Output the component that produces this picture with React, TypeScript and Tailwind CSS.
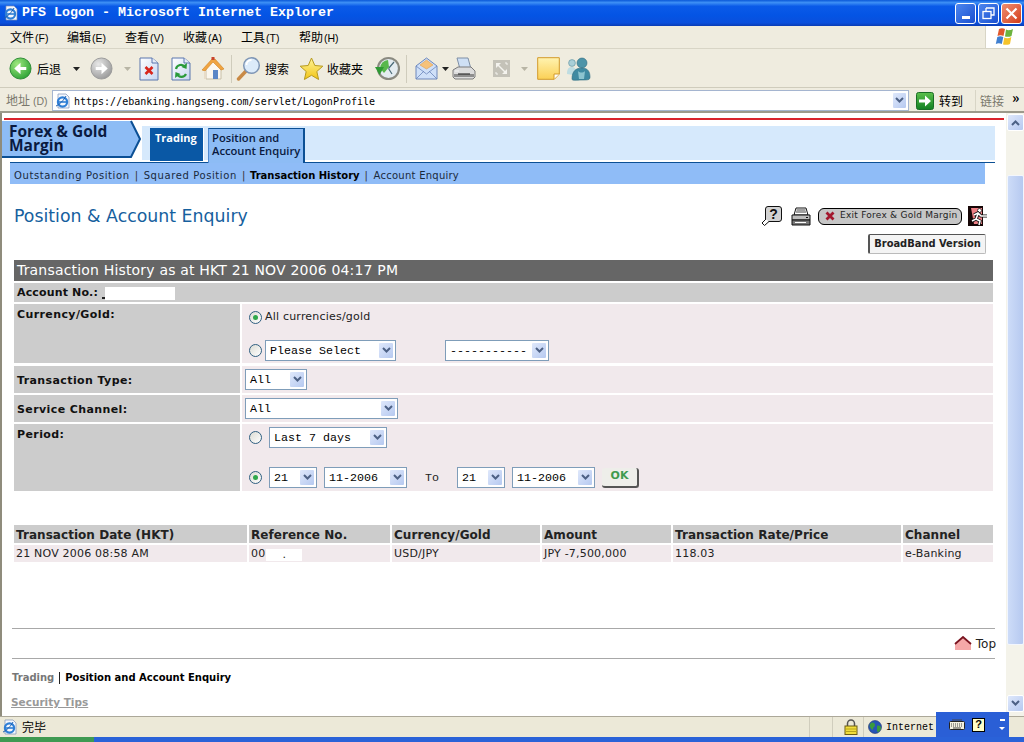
import React from "react";

const Ie = ({ s = 16 }: { s?: number }) => (
  <svg width={s} height={s} viewBox="0 0 16 16">
    <path d="M3 1h8l3 3v11H3z" fill="#f4f7fd" stroke="#7d8fb5" strokeWidth=".7" />
    <circle cx="7.5" cy="9" r="4.6" fill="none" stroke="#2f7fd6" strokeWidth="2.2" />
    <path d="M3.5 9h8" stroke="#2f7fd6" strokeWidth="1.6" />
    <path d="M1 13c3-1 8-6 10-10" stroke="#1c5fb0" strokeWidth="1" fill="none" />
  </svg>
);

const Arrow = ({ gray }: { gray?: boolean }) => (
  <svg width="23" height="23" viewBox="0 0 24 24">
    <defs>
      <radialGradient id={gray ? "ga" : "gb"} cx=".35" cy=".3" r=".85">
        <stop offset="0" stopColor={gray ? "#e8e8e8" : "#9fe87f"} />
        <stop offset="1" stopColor={gray ? "#8f8f8f" : "#1f9a2c"} />
      </radialGradient>
    </defs>
    <circle cx="12" cy="12" r="11" fill={`url(#${gray ? "ga" : "gb"})`} stroke={gray ? "#9a9a9a" : "#2c8a34"} />
    {gray ? (
      <path d="M6 10.5h6V6l6.5 6-6.5 6v-4.5H6z" fill="#fff" />
    ) : (
      <path d="M18 10.5h-6V6l-6.5 6 6.5 6v-4.5h6z" fill="#fff" />
    )}
  </svg>
);

const Drop = ({ light }: { light?: boolean }) => (
  <svg width="7" height="4" viewBox="0 0 7 4">
    <path d="M0 0h7L3.5 4z" fill={light ? "#b8b5a5" : "#222"} />
  </svg>
);

const PageIcon = ({ children }: { children: React.ReactNode }) => (
  <svg width="20" height="24" viewBox="0 0 20 24">
    <defs>
      <linearGradient id="pg" x1="0" y1="0" x2="1" y2="1">
        <stop offset="0" stopColor="#ffffff" />
        <stop offset="1" stopColor="#c6d6f2" />
      </linearGradient>
    </defs>
    <path d="M1 1h12l6 5v17H1z" fill="url(#pg)" stroke="#5b76ad" />
    <path d="M13 1v5h6" fill="#e6ecf8" stroke="#5b76ad" />
    {children}
  </svg>
);

const Home = () => (
  <svg width="24" height="24" viewBox="0 0 24 24">
    <path d="M5 11v11h15V10L12 4z" fill="#fbf7ee" stroke="#c8bfa8" />
    <path d="M1 13 11 2h3l9 10-3 1-8-8-8 9z" fill="#f0a440" stroke="#d08220" strokeWidth=".6" />
    <path d="M3 14h2v8H3z" fill="#e8dcc8" />
    <rect x="12" y="13" width="5" height="9" fill="#5a86c6" />
    <rect x="10.500" y="0" width="3" height="3" fill="#c8442c" />
  </svg>
);

const Search = () => (
  <svg width="25" height="25" viewBox="0 0 25 25">
    <path d="M10 15 2.500 23" stroke="#c98a45" strokeWidth="3.400" strokeLinecap="round" />
    <circle cx="15.500" cy="9.500" r="7.800" fill="#dcebfa" stroke="#7f96b5" strokeWidth="1.500" />
    <path d="M10.500 9a5 5 0 0 1 5-5" stroke="#fff" strokeWidth="1.800" fill="none" />
  </svg>
);

const Star = () => (
  <svg width="25" height="24" viewBox="0 0 25 24">
    <defs>
      <linearGradient id="st" x1="0" y1="0" x2="0" y2="1">
        <stop offset="0" stopColor="#fff59a" />
        <stop offset="1" stopColor="#f2c414" />
      </linearGradient>
    </defs>
    <path d="m12.500 1 3.300 7.500 8 .7-6 5.300 1.800 8-7.100-4.200-7.100 4.200 1.800-8-6-5.300 8-.7z" fill="url(#st)" stroke="#b79a20" />
  </svg>
);

const History = () => (
  <svg width="25" height="25" viewBox="0 0 25 25">
    <circle cx="13.500" cy="12.500" r="10.500" fill="#e4ecf0" stroke="#8a8a80" strokeWidth="2.200" />
    <path d="M13.500 12.500 19 6M13.500 12.500 17 18" stroke="#4a6a78" strokeWidth="1.200" />
    <path d="M13 4a8.500 8.500 0 0 0-8 8l4 5 5-6z" fill="#58b84c" />
    <path d="M0 11h9l-4.500 8z" fill="#2f9a34" />
  </svg>
);

const Mail = () => (
  <svg width="23" height="25" viewBox="0 0 23 25">
    <path d="M1 10 11.500 2 22 10v13H1z" fill="#cfe0f8" stroke="#6c87bb" />
    <path d="M5 9 11.500 4 18 9l-6.500 4z" fill="#f6c27a" stroke="#e0a050" strokeWidth=".6" />
    <path d="M1 10l10.500 8L22 10" fill="none" stroke="#6c87bb" strokeWidth=".8" />
    <path d="M1 23 9 15M22 23l-8-8" stroke="#6c87bb" strokeWidth=".8" />
  </svg>
);

const Printer = () => (
  <svg width="24" height="24" viewBox="0 0 24 24">
    <path d="M5 1h11l3 11H8z" fill="#cfe0f5" stroke="#7f8fa5" />
    <path d="M1 13 6 10h13l4 4v6l-2 2H3l-2-2z" fill="#dcdcdc" stroke="#7a7a7a" />
    <path d="M2 17h20v3H2z" fill="#8e8e8e" />
    <path d="M6 17h12" stroke="#333" strokeWidth="1.200" />
    <path d="M3 14h4" stroke="#f4f4f4" />
  </svg>
);

const FullScreen = () => (
  <svg width="17" height="17" viewBox="0 0 17 17">
    <rect x="0" y="0" width="17" height="17" fill="#c4c2b8" />
    <path d="M3 3h5L3 8zM14 14H9l5-5z" fill="#f4f3ee" />
    <path d="m5 5 7 7" stroke="#f4f3ee" strokeWidth="1.400" />
    <path d="M12 3h2v2M3 12v2h2" stroke="#f4f3ee" fill="none" />
  </svg>
);

const Note = () => (
  <svg width="23" height="23" viewBox="0 0 23 23">
    <defs>
      <linearGradient id="nt" x1="0" y1="0" x2="0" y2="1">
        <stop offset="0" stopColor="#fff3b0" />
        <stop offset="1" stopColor="#fbd056" />
      </linearGradient>
    </defs>
    <path d="M.7.700h21.600V17l-5 5.300H.7z" fill="url(#nt)" stroke="#d39a2a" />
    <path d="M17 22v-5h5.300" fill="#fff" stroke="#d39a2a" />
  </svg>
);

const Messenger = () => (
  <svg width="25" height="24" viewBox="0 0 25 24">
    <circle cx="6" cy="6" r="3.400" fill="#a9cfd8" stroke="#5d8e9c" strokeWidth=".6" />
    <path d="M1 17c0-6 2-7 5-7 2 0 3 1 4 3l-3 5z" fill="#bfdde2" />
    <circle cx="16" cy="6" r="5" fill="#4e94a8" stroke="#2f6c80" strokeWidth=".6" />
    <path d="M6 22c0-8 4-11 10-11s8 4 8 9c0 3-2 3-8 3s-10 1-10-1z" fill="#3f8aa2" stroke="#2f6c80" strokeWidth=".6" />
    <path d="M12 14c2 2 5 2 7 0l-1 8h-5z" fill="#8cc4d0" />
  </svg>
);

const Go = () => (
  <svg width="18" height="18" viewBox="0 0 18 18">
    <defs>
      <linearGradient id="go" x1="0" y1="0" x2="0" y2="1">
        <stop offset="0" stopColor="#5cc04c" />
        <stop offset="1" stopColor="#128022" />
      </linearGradient>
    </defs>
    <rect x=".5" y=".5" width="17" height="17" rx="2" fill="url(#go)" stroke="#1a6d26" />
    <path d="M3 7.500h6V3.500l6 5.500-6 5.500v-4H3z" fill="#fff" />
  </svg>
);

const Flag = () => (
  <svg width="20" height="19" viewBox="0 0 20 19">
    <path d="M4 1c2-1 4-1 6 0L8.500 8c-2-1-4-1-6 0z" fill="#e0582c" />
    <path d="M11 1.500c2 1 4 1 7-.5l-1.500 7c-2 1-4.500 1-6.500.5z" fill="#6cb33f" />
    <path d="M2.300 9c2-1 4-1 6 0l-1.500 7c-2-1-4-1-6 0z" fill="#3f7fd0" />
    <path d="M9.300 9.500c2 1 4.500 1 7-.5L15 16c-2 1-5 1-7 .5z" fill="#f5c32c" />
  </svg>
);

const Lock = () => (
  <svg width="14" height="16" viewBox="0 0 14 16">
    <path d="M3.500 7V4.500a3.500 3.500 0 0 1 7 0V7" fill="none" stroke="#555" strokeWidth="1.500" />
    <rect x="1" y="7" width="12" height="8.500" fill="#f2de3c" stroke="#6a5d14" />
    <path d="M1 10h12M1 12.500h12" stroke="#b7a41c" />
  </svg>
);

const Globe = () => (
  <svg width="14" height="14" viewBox="0 0 14 14">
    <circle cx="7" cy="7" r="6.500" fill="#2653b5" stroke="#1c2f6a" strokeWidth=".6" />
    <path d="M3 3c2-1 4 0 4 2S5 7 5 9 3 9 2 7 2 4 3 3zM9 6c2-1 4 0 4 2s-2 4-3 4-1-2-1-3z" fill="#3a9a3c" />
  </svg>
);

const Keyboard = () => (
  <svg width="16" height="11" viewBox="0 0 16 11">
    <rect x=".5" y="2.500" width="15" height="8" rx="1" fill="#f2efe0" stroke="#222" />
    <path d="M2 5h12M2 7h12" stroke="#444" strokeDasharray="1 1" />
    <path d="M4 9h8M3 1h10" stroke="#444" />
  </svg>
);

const Help = () => (
  <div className="flex h-[14px] w-[13px] items-center justify-center border border-black bg-[#ffffc8] text-[11px] font-bold leading-none text-black [font-family:'Liberation_Sans',sans-serif]">
    ?
  </div>
);

const HelpBubble = () => (
  <svg width="21" height="21" viewBox="0 0 21 21">
    <rect x="4.500" y=".5" width="16" height="15" rx="2.500" fill="#d2d2d2" stroke="#111" />
    <path d="M5 13 1 17l2.500 2.500L8 15.500" fill="#fff" stroke="#111" />
    <text x="12.500" y="13" fontSize="14" fontWeight="700" textAnchor="middle" fontFamily="'Liberation Sans',sans-serif" fill="#111">?</text>
  </svg>
);

const PagePrinter = () => (
  <svg width="20" height="19" viewBox="0 0 20 19">
    <path d="M5 1h10l2 7H3z" fill="#fff" stroke="#111" />
    <path d="M5.500 3h9M5 5h10" stroke="#111" strokeWidth=".8" />
    <path d="M1 8h18v5H1z" fill="#bdbdbd" stroke="#111" />
    <path d="M1 13h18v5H1z" fill="#777" stroke="#111" />
    <path d="M4 15.500h11" stroke="#fff" />
    <path d="M15 10.500h2" stroke="#111" />
  </svg>
);

const ExitMan = () => (
  <svg width="20" height="20" viewBox="0 0 20 20">
    <rect x="0" y="0" width="15" height="20" fill="#160606" />
    <path d="M3 2h11v16H6z" fill="#ee7f85" />
    <circle cx="11.500" cy="4.500" r="2" fill="#fff" stroke="#111" strokeWidth=".7" />
    <path d="m6 9 4-2 3 3h6M10 8l-2 5-4 2M8 13l4 2-1 4" stroke="#111" strokeWidth="3.200" fill="none" />
    <path d="m6 9 4-2 3 3h6M10 8l-2 5-4 2M8 13l4 2-1 4" stroke="#fff" strokeWidth="1.600" fill="none" />
  </svg>
);

const Chevron = ({ c = "#4d6185" }: { c?: string }) => (
  <svg width="9" height="7" viewBox="0 0 9 7">
    <path d="m1 1 3.500 3.500L8 1" stroke={c} strokeWidth="2" fill="none" />
  </svg>
);

const ChevronUp = () => (
  <svg width="9" height="7" viewBox="0 0 9 7">
    <path d="m1 6 3.500-3.500L8 6" stroke="#4d6185" strokeWidth="2" fill="none" />
  </svg>
);

const ArrowBox = ({ className }: { className: string }) => (
  <div className={`flex items-center justify-center rounded-[2px] border border-white bg-gradient-to-br from-[#dfe8fb] to-[#b6c9f0] ${className}`}>
    <Chevron />
  </div>
);

const Select = ({ text, className }: { text: string; className: string }) => (
  <div className={`flex h-[21px] shrink-0 items-center justify-between border border-[#7f9db9] bg-white pl-[4px] pr-[1px] text-[11.67px] text-black [font-family:'Liberation_Mono',monospace] ${className}`}>
    <span className="whitespace-pre pt-[2px]">{text}</span>
    <ArrowBox className="h-[17px] w-[16px]" />
  </div>
);

const Radio = ({ on }: { on?: boolean }) => (
  <div className="flex h-[13px] w-[13px] shrink-0 items-center justify-center rounded-full border border-[#2f5f80] bg-gradient-to-br from-[#dcdcd4] to-white">
    {on && <div className="h-[5px] w-[5px] rounded-full bg-[#2fa84a]" />}
  </div>
);

const Menu = ({ t, k, w }: { t: string; k: string; w: string }) => (
  <div className={`whitespace-nowrap ${w}`}>
    {t}
    <span className="ml-[1px] text-[10.500px] [font-family:'Liberation_Sans',sans-serif]">({k})</span>
  </div>
);

const Label = ({ children, className = "" }: { children: React.ReactNode; className?: string }) => (
  <div className={`w-[226px] shrink-0 bg-[#cccccc] pl-[3px] text-[11px] font-bold tracking-[.4px] text-[#111] ${className}`}>{children}</div>
);

const columns = [
  ["w-[233px]", "Transaction Date (HKT)", "21 NOV 2006 08:58 AM"],
  ["w-[141px]", "Reference No.", "00"],
  ["w-[148px]", "Currency/Gold", "USD/JPY"],
  ["w-[129px]", "Amount", "JPY -7,500,000"],
  ["w-[228px]", "Transaction Rate/Price", "118.03"],
  ["w-[90px]", "Channel", "e-Banking"],
];

export default function App() {
  return (
    <div className="relative flex h-[742px] w-[1024px] flex-col overflow-hidden bg-[#ece9d8] [font-family:'DejaVu_Sans',sans-serif]">
      {/* title bar */}
      <div className="flex h-[26px] shrink-0 items-center bg-[linear-gradient(180deg,#0a58d8_0%,#3d8ff5_10%,#0a5ae8_24%,#0454e4_60%,#0a4fdc_88%,#0a3cb4_100%)] pl-[3px] pr-[2px]">
        <Ie />
        <div className="ml-[3px] flex-1 whitespace-pre text-[13.33px] font-bold text-white [font-family:'Liberation_Mono',monospace]">PFS Logon - Microsoft Internet Explorer</div>
        <div className="flex gap-[2px]">
          <div className="flex h-[21px] w-[21px] items-end justify-center rounded-[3px] border border-white bg-gradient-to-br from-[#4d86ee] to-[#1a4fd0] pb-[4px]">
            <div className="h-[3px] w-[8px] bg-white" />
          </div>
          <div className="flex h-[21px] w-[21px] items-center justify-center rounded-[3px] border border-white bg-gradient-to-br from-[#4d86ee] to-[#1a4fd0]">
            <svg width="13" height="13" viewBox="0 0 13 13">
              <path d="M4 1h8v7H9M4 1v3" fill="none" stroke="#fff" strokeWidth="1.300" />
              <rect x="1" y="4.500" width="8" height="7" fill="none" stroke="#fff" strokeWidth="1.300" />
            </svg>
          </div>
          <div className="flex h-[21px] w-[21px] items-center justify-center rounded-[3px] border border-white bg-gradient-to-br from-[#ee8d70] to-[#d33a12]">
            <svg width="13" height="13" viewBox="0 0 13 13">
              <path d="m1.500 1.500 10 10M11.500 1.500l-10 10" stroke="#fff" strokeWidth="2.200" />
            </svg>
          </div>
        </div>
      </div>

      {/* menu bar */}
      <div className="flex h-[23px] shrink-0 items-center border-b border-[#d8d5c6] bg-[#efecdf] pl-[10px] text-[12px] text-black [font-family:'Noto_Sans_CJK_SC',sans-serif]">
        <Menu t="文件" k="F" w="w-[57px]" />
        <Menu t="编辑" k="E" w="w-[58px]" />
        <Menu t="查看" k="V" w="w-[58px]" />
        <Menu t="收藏" k="A" w="w-[58px]" />
        <Menu t="工具" k="T" w="w-[58px]" />
        <Menu t="帮助" k="H" w="w-[58px]" />
        <div className="flex-1" />
        <div className="flex h-full w-[39px] items-center justify-center border-l border-[#d8d5c6] bg-white">
          <Flag />
        </div>
      </div>

      {/* toolbar */}
      <div className="flex h-[39px] shrink-0 items-center border-b border-[#cfccbc] bg-[#efecdf] pl-[9px] pt-[1px] text-[12px] text-black [font-family:'Noto_Sans_CJK_SC',sans-serif]">
        <Arrow />
        <span className="ml-[5px] w-[24px] whitespace-nowrap">后退</span>
        <div className="ml-[12px]"><Drop /></div>
        <div className="ml-[10px]"><Arrow gray /></div>
        <div className="ml-[11px]"><Drop light /></div>
        <div className="ml-[8px]">
          <PageIcon><path d="m6.500 10 7 7M13.500 10l-7 7" stroke="#d8261c" strokeWidth="2.600" /></PageIcon>
        </div>
        <div className="ml-[12px]">
          <PageIcon>
            <path d="M5 12a5 5 0 0 1 9-2" stroke="#2a9a3a" strokeWidth="2.200" fill="none" />
            <path d="M15 17a5 5 0 0 1-9 0" stroke="#2a9a3a" strokeWidth="2.200" fill="none" />
            <path d="m16 6-.5 6-5-2zM4 21l.5-6 5 2z" fill="#2a9a3a" />
          </PageIcon>
        </div>
        <div className="ml-[10px]"><Home /></div>
        <div className="ml-[6px] h-[28px] w-px bg-[#cfccbc]" />
        <div className="ml-[4px]"><Search /></div>
        <span className="ml-[4px] w-[24px] whitespace-nowrap">搜索</span>
        <div className="ml-[10px]"><Star /></div>
        <span className="ml-[3px] w-[36px] whitespace-nowrap">收藏夹</span>
        <div className="ml-[12px]"><History /></div>
        <div className="ml-[6px] h-[28px] w-px bg-[#cfccbc]" />
        <div className="ml-[8px]"><Mail /></div>
        <div className="ml-[4px]"><Drop /></div>
        <div className="ml-[3px]"><Printer /></div>
        <div className="ml-[17px]"><FullScreen /></div>
        <div className="ml-[11px]"><Drop light /></div>
        <div className="ml-[9px]"><Note /></div>
        <div className="ml-[6px]"><Messenger /></div>
      </div>

      {/* address bar */}
      <div className="flex h-[25px] shrink-0 items-center border-b-2 border-[#9c9a8c] bg-[#efecdf] pl-[6px] pt-[2px] text-[12px] [font-family:'Noto_Sans_CJK_SC',sans-serif]">
        <span className="w-[46px] whitespace-nowrap text-[#7a786c]">地址<span className="ml-[3px] text-[10.500px] [font-family:'Liberation_Sans',sans-serif]">(D)</span></span>
        <div className="flex h-[21px] w-[857px] items-center border border-[#a5b5d0] bg-white pl-[2px] pr-[1px]">
          <Ie />
          <span className="ml-[3px] flex-1 pt-[1px] text-[10px] text-black [font-family:'DejaVu_Sans_Mono',monospace]">https://ebanking.hangseng.com/servlet/LogonProfile</span>
          <ArrowBox className="h-[17px] w-[15px]" />
        </div>
        <div className="ml-[7px]"><Go /></div>
        <span className="ml-[5px] w-[36px] whitespace-nowrap text-black">转到</span>
        <div className="h-full w-px bg-[#d8d5c6]" />
        <span className="ml-[4px] w-[28px] whitespace-nowrap text-[#7a786c]">链接</span>
        <span className="ml-[4px] -mt-[8px] text-[14px] font-bold leading-none text-black">»</span>
      </div>

      {/* viewport */}
      <div className="flex h-[603px] shrink-0 border-l-2 border-[#8f8c7c] bg-white">
        <div className="w-[1004px] shrink-0 overflow-hidden">
          <div className="mx-[2px] mt-[5px] h-[2px] w-[1000px] bg-[#d9232c]" />

          {/* heading band */}
          <div className="flex h-[42px]">
            <div className="relative h-[39px] w-[140px] shrink-0">
              <svg className="absolute inset-0" width="140" height="39" viewBox="0 0 140 39">
                <path d="M0 1h129l9 18-9 18H0z" fill="#8dbcf5" />
                <path d="M129 1l9 18-9 18H0" fill="none" stroke="#0b4f94" strokeWidth="2" />
              </svg>
              <div className="absolute left-[7px] top-[4px] text-[15.500px] font-bold leading-[14px] text-[#0a1a40] [font-family:'Open_Sans',sans-serif]">Forex &amp; Gold<br />Margin</div>
            </div>
            <div className="mt-[6px] flex h-[34px] w-[853px] items-end bg-[#d6e9fc] pl-[8px]">
              <div className="-mb-[1px] h-[33px] w-[53px] bg-[#0a58a5] pl-[5px] pt-[2px] text-[11px] font-bold text-white [font-family:'Open_Sans',sans-serif]">Trading</div>
              <div className="-mb-[1px] h-[33px] w-px bg-white" />
              <div className="relative z-10 ml-[4px] -mb-[3px] h-[35px] w-[97px] border-t border-r-2 border-l border-[#0b4f94] border-l-[#4f8ad0] bg-[#8dbcf5] pl-[3px] pt-[2px] text-[11.200px] font-semibold leading-[13px] text-[#0a1a40] [font-family:'Open_Sans',sans-serif]">Position and<br />Account Enquiry</div>
            </div>
          </div>
          <div className="ml-[8px] h-px w-[985px] bg-[#0b4f94]" />

          {/* sub nav */}
          <div className="ml-[8px] flex h-[21px] w-[975px] items-center bg-[#8fbcf7] pl-[4px] pt-[3px] text-[10px] tracking-[.6px] text-[#1a2a3c]">
            <span>Outstanding Position</span>
            <span className="mx-[5px] text-[#333]">|</span>
            <span>Squared Position</span>
            <span className="ml-[5px] mr-[4px] text-[#333]">|</span>
            <span className="font-bold tracking-normal text-black">Transaction History</span>
            <span className="mx-[5px] text-[#333]">|</span>
            <span className="tracking-[.25px]">Account Enquiry</span>
          </div>

          {/* page title row */}
          <div className="mt-[20px] flex h-[24px] items-center pl-[12px] pr-[18px]">
            <div className="flex-1 text-[17.350px] text-[#16609e]">Position &amp; Account Enquiry</div>
            <HelpBubble />
            <div className="ml-[9px]"><PagePrinter /></div>
            <div className="ml-[7px] flex h-[17px] w-[144px] items-center rounded-[6px] border border-black bg-[#c6c6c6] pl-[6px] text-[9px] text-[#222]">
              <svg width="10" height="10" viewBox="0 0 10 10"><path d="m1.500 1.500 7 7M8.500 1.500l-7 7" stroke="#a3182e" strokeWidth="2.800" /></svg>
              <span className="ml-[5px] whitespace-nowrap tracking-[.25px]">Exit Forex &amp; Gold Margin</span>
            </div>
            <div className="ml-[6px]"><ExitMan /></div>
          </div>

          {/* version button */}
          <div className="mt-[6px] flex justify-end pr-[20px]">
            <div className="flex h-[20px] w-[118px] items-center justify-center whitespace-nowrap rounded-[2px] border border-[#bbb] border-t-[#555] border-l-[#555] border-l-2 bg-[#f4f4f4] text-[11px] font-bold text-[#222] [font-stretch:condensed]">BroadBand Version</div>
          </div>

          {/* form */}
          <div className="ml-[12px] mt-[6px] w-[979px]">
            <div className="flex h-[21px] items-center bg-[#666666] pl-[3px] text-[14px] tracking-[.18px] text-white">Transaction History as at HKT 21 NOV 2006 04:17 PM</div>
            <div className="mt-[2px] flex h-[19px] items-center bg-[#cccccc] pl-[3px] pt-[1px] text-[11px] font-bold tracking-[.15px] text-[#111]">
              Account No.:
              <span className="ml-[4px] mb-[3px] h-[2px] w-[3px] self-end bg-[#222]" />
              <span className="h-[13px] w-[70px] bg-white" />
            </div>

            <div className="mt-[2px] flex h-[59px]">
              <Label className="pt-[3px]">Currency/Gold:</Label>
              <div className="ml-[2px] flex flex-1 flex-col bg-[#f1e9ec] pl-[7px]">
                <div className="mt-[6px] flex h-[14px] items-center">
                  <Radio on />
                  <span className="ml-[3px] text-[11px] tracking-[.2px] text-[#222]">All currencies/gold</span>
                </div>
                <div className="mt-[16px] flex items-center">
                  <Radio />
                  <Select text="Please Select" className="ml-[3px] w-[131px]" />
                  <Select text="-----------" className="ml-[49px] w-[104px]" />
                </div>
              </div>
            </div>

            <div className="mt-[3px] flex h-[27px]">
              <Label className="pt-[7px]">Transaction Type:</Label>
              <div className="ml-[2px] flex flex-1 items-center bg-[#f1e9ec] pl-[3px]">
                <Select text="All" className="w-[62px]" />
              </div>
            </div>

            <div className="mt-[2px] flex h-[27px]">
              <Label className="pt-[7px]">Service Channel:</Label>
              <div className="ml-[2px] flex flex-1 items-center bg-[#f1e9ec] pl-[3px]">
                <Select text="All" className="w-[153px]" />
              </div>
            </div>

            <div className="mt-[2px] flex h-[67px]">
              <Label className="pt-[3px]">Period:</Label>
              <div className="ml-[2px] flex flex-1 flex-col bg-[#f1e9ec] pl-[7px]">
                <div className="mt-[3px] flex items-center">
                  <Radio />
                  <Select text="Last 7 days" className="ml-[7px] w-[118px]" />
                </div>
                <div className="mt-[19px] flex items-center">
                  <Radio on />
                  <Select text="21" className="ml-[7px] w-[48px]" />
                  <Select text="11-2006" className="ml-[7px] w-[83px]" />
                  <span className="ml-[18px] w-[32px] pt-[2px] text-[11.67px] text-[#222] [font-family:'Liberation_Mono',monospace]">To</span>
                  <Select text="21" className="w-[48px]" />
                  <Select text="11-2006" className="ml-[7px] w-[83px]" />
                  <div className="ml-[7px] flex h-[20px] w-[37px] items-center justify-center rounded-[3px] border-r-2 border-b-2 border-[#555] bg-[#eeeeea] text-[11px] font-bold text-[#3f9a4f]">OK</div>
                </div>
              </div>
            </div>

            {/* history */}
            <div className="mt-[34px] flex gap-[2px]">
              {columns.map(([w, h]) => (
                <div key={h} className={`${w} flex h-[18px] items-center whitespace-nowrap bg-[#cccccc] pl-[2px] pt-[1px] text-[12px] font-bold tracking-[.05px] text-[#222]`}>{h}</div>
              ))}
            </div>
            <div className="mt-[2px] flex gap-[2px]">
              {columns.map(([w, h, v]) => (
                <div key={h} className={`${w} flex h-[17px] items-center whitespace-nowrap bg-[#f1e9ec] pl-[2px] pt-[2px] text-[11px] tracking-[.2px] text-[#222]`}>
                  {v}
                  {h === "Reference No." && <span className="ml-[1px] flex h-[12px] w-[36px] items-center justify-center bg-white leading-none">.</span>}
                </div>
              ))}
            </div>
          </div>

          {/* footer */}
          <div className="ml-[10px] mt-[66px] w-[983px] border-t border-[#a8a8a8]">
            <div className="flex h-[29px] items-center justify-end text-[12px] text-[#222]">
              <svg width="18" height="15" viewBox="0 0 18 15">
                <path d="M1 7.500 9 1l8 6.500v6.500H1z" fill="#f5a8a8" />
                <path d="M1 8 9 1l8 7" fill="none" stroke="#7a1420" strokeWidth="1.800" />
              </svg>
              <span className="ml-[4px] mr-[-1px]">Top</span>
            </div>
          </div>
          <div className="ml-[10px] w-[983px] border-t border-[#a8a8a8] pt-[12px] font-bold">
            <div className="flex h-[13px] items-center text-[10px]">
              <span className="text-[#777]">Trading</span>
              <span className="mx-[5px] h-[12px] w-px bg-[#222]" />
              <span className="text-black">Position and Account Enquiry</span>
            </div>
            <div className="-ml-[1px] mt-[11px] text-[10.500px] text-[#999] underline">Security Tips</div>
          </div>
        </div>

        {/* scrollbar */}
        <div className="flex flex-1 flex-col items-center bg-[#f4f3ea] pt-[1px]">
          <div className="flex h-[17px] w-[17px] items-center justify-center rounded-[2px] border border-white bg-gradient-to-br from-[#dfe8fb] to-[#b6c9f0]">
            <ChevronUp />
          </div>
          <div className="mt-[44px] h-[470px] w-[17px] rounded-[2px] border border-[#f3f6fd] bg-gradient-to-r from-[#cddcf8] to-[#b6c9f0]" />
          <div className="flex-1" />
          <div className="mb-[4px] flex h-[17px] w-[17px] items-center justify-center rounded-[2px] border border-white bg-gradient-to-br from-[#dfe8fb] to-[#b6c9f0]">
            <Chevron />
          </div>
        </div>
      </div>

      {/* status bar */}
      <div className="flex h-[21px] shrink-0 items-center border-t border-[#aca899] bg-[#ece9d8] pl-[2px] text-[12px] text-black">
        <Ie />
        <span className="ml-[4px] [font-family:'Noto_Sans_CJK_SC',sans-serif]">完毕</span>
        <div className="flex-1" />
        <div className="mr-[22px] h-full w-px bg-[#d0cdbd]" />
        <div className="mr-[11px] h-full w-px bg-[#d0cdbd]" />
        <Lock />
        <div className="ml-[5px] h-full w-px bg-[#d0cdbd]" />
        <div className="ml-[4px]"><Globe /></div>
        <span className="ml-[4px] w-[138px] text-[10px] [font-family:'Liberation_Mono',monospace]">Internet</span>
      </div>

      {/* taskbar edge */}
      <div className="flex h-[5px] shrink-0">
        <div className="w-[94px] bg-[#3f9a52]" />
        <div className="flex-1 bg-[#2a62d8]" />
      </div>

      {/* language bar over the status bar */}
      <div className="absolute left-[936px] top-[712px] flex h-[25px] w-[73px] items-center bg-[#2a5fd6] pl-[13px]">
        <Keyboard />
        <div className="ml-[7px]"><Help /></div>
        <div className="ml-[14px] flex flex-col items-center gap-[6px]">
          <div className="h-[2px] w-[5px] bg-white" />
          <svg width="6" height="3" viewBox="0 0 6 3"><path d="M0 0h6L3 3z" fill="#fff" /></svg>
        </div>
      </div>
    </div>
  );
}
